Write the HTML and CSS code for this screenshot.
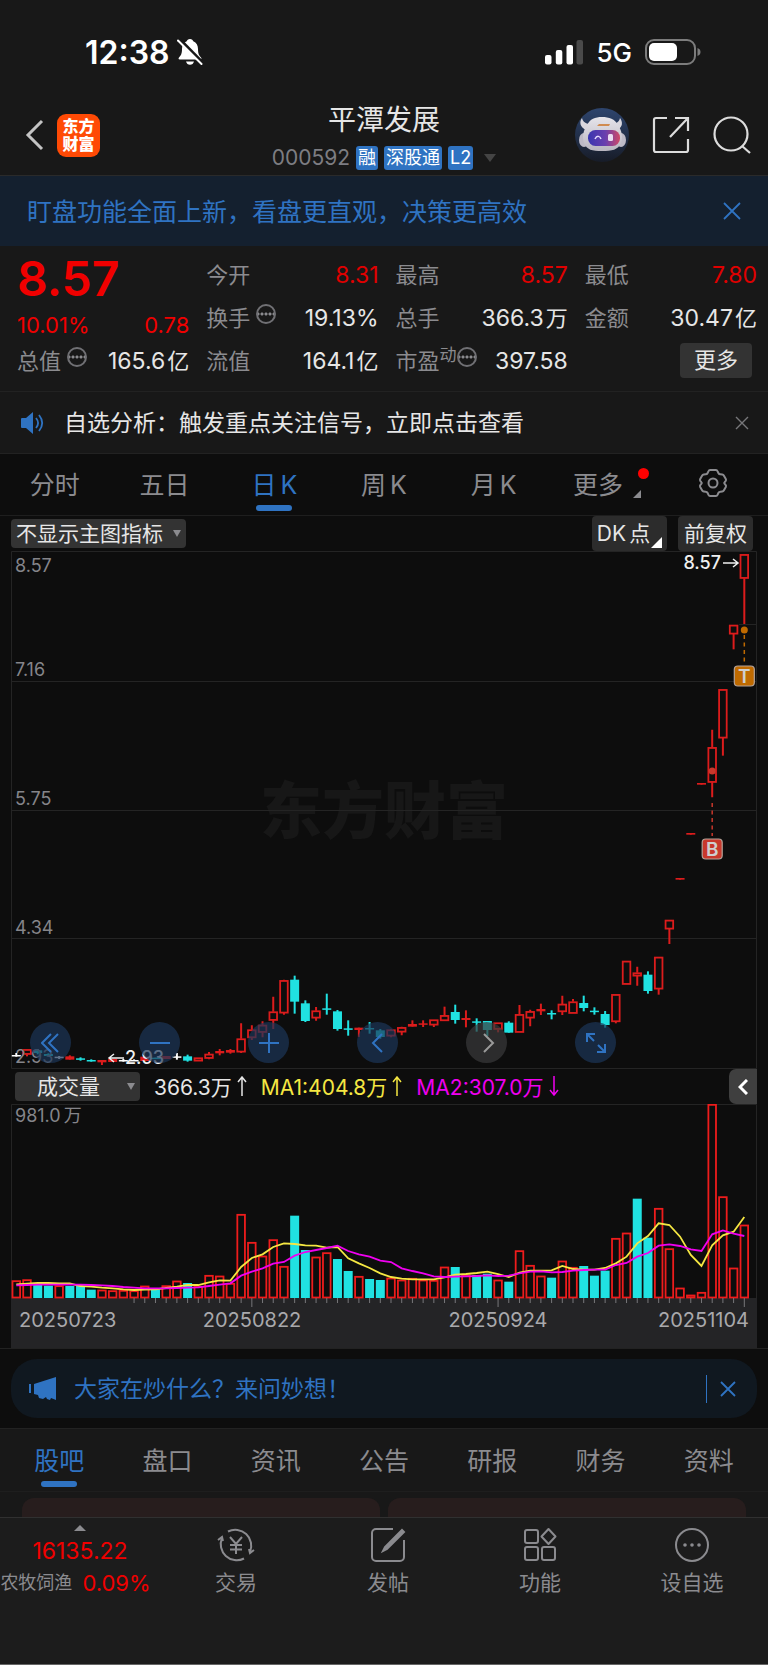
FILE: index.html
```html
<!DOCTYPE html>
<html lang="zh-CN">
<head>
    <meta charset="UTF-8">
    <meta name="viewport" content="width=device-width, initial-scale=1.0">
    <title>平潭发展 000592</title>
    <link rel="stylesheet" href="styles.css">
</head>
<body>
    <div class="status-bar">
        <div class="status-left">
            <span class="clock">12:38</span>
            <svg width="26" height="28" viewBox="0 0 26 28">
                <path d="M13 1c-1.8 0-3 1-3.300 2.300C6.500 4.500 5 7.500 5 11c0 5-1.200 6.500-3 8.500-.8 1-.5 2 .8 2h20.400c1.300 0 1.600-1 .8-2-1.800-2-3-3.500-3-8.500 0-3.500-1.500-6.500-4.700-7.700C16 2 14.800 1 13 1z" fill="#fff"/>
                <path d="M9 23.500h8c-.5 2-2 3.300-4 3.300s-3.500-1.300-4-3.300z" fill="#fff"/>
                <path d="M2.500 1L26 25" stroke="#181818" stroke-width="3"/>
                <path d="M1 2.500L24.500 26" stroke="#fff" stroke-width="2" stroke-linecap="round"/>
            </svg>
        </div>
        <div class="status-right">
            <svg width="38" height="25" viewBox="0 0 38 25">
                <rect x="0" y="15" width="6.500" height="9.500" rx="2" fill="#fff"/>
                <rect x="10.800" y="10" width="6.500" height="14.500" rx="2" fill="#fff"/>
                <rect x="21.500" y="5" width="6.500" height="19.500" rx="2" fill="#fff"/>
                <rect x="31.500" y="0" width="6.500" height="24.500" rx="2" fill="#4a4a4a"/>
            </svg>
            <span class="network">5G</span>
            <svg width="56" height="26" viewBox="0 0 56 26">
                <rect x="1" y="1" width="49" height="24" rx="8" fill="none" stroke="#7c7c7c" stroke-width="2"/>
                <rect x="4" y="4" width="28" height="18" rx="5" fill="#fff"/>
                <path d="M52.500 9c2 .8 3 2 3 4s-1 3.200-3 4z" fill="#7c7c7c"/>
            </svg>
        </div>
    </div>

    <header class="header">
        <div class="header-left">
            <button class="icon-btn" aria-label="返回">
                <svg width="19" height="32" viewBox="0 0 19 32" fill="none" stroke="#c4c4c4" stroke-width="3"><path d="M17 2L3 16l14 14"/></svg>
            </button>
            <a class="logo" href="#"><span>东方</span><span>财富</span></a>
        </div>
        <div class="header-title">
            <h1>平潭发展</h1>
            <div class="stock-code">
                <span>000592</span>
                <span class="tag">融</span>
                <span class="tag">深股通</span>
                <span class="tag">L2</span>
                <i class="caret"></i>
            </div>
        </div>
        <div class="header-right">
            <button class="icon-btn" aria-label="妙想">
                <svg width="54" height="54" viewBox="0 0 54 54">
                    <defs>
                        <linearGradient id="sky" x1="0" y1="0" x2="0" y2="1"><stop offset="0" stop-color="#2e456e"/><stop offset="1" stop-color="#171c28"/></linearGradient>
                        <linearGradient id="visor" x1="0" y1="0" x2="1" y2="0"><stop offset="0" stop-color="#3a36b0"/><stop offset=".55" stop-color="#6a3fae"/><stop offset="1" stop-color="#d04866"/></linearGradient>
                        <linearGradient id="shell" x1="0" y1="0" x2="0" y2="1"><stop offset="0" stop-color="#e6e4ea"/><stop offset="1" stop-color="#b9b6c0"/></linearGradient>
                    </defs>
                    <circle cx="27" cy="27" r="27" fill="url(#sky)"/>
                    <path d="M7 10c-3 4-2 9 4 12l5-6c-5 0-8-2-9-6zM45 10c3 4 3 9-3 12l-6-6c5 0 8-2 9-6z" fill="#d9d7de"/>
                    <ellipse cx="9" cy="32" rx="5" ry="7" fill="#bdbac6"/>
                    <ellipse cx="46" cy="32" rx="5" ry="7" fill="#bdbac6"/>
                    <path d="M12 17c3-6 8-8 15-8s13 2 16 8c4 6 5 12 3 18-3 7-9 8-19 8S12 42 9 35c-2-6-1-12 3-18z" fill="url(#shell)"/>
                    <rect x="13" y="22" width="32" height="16" rx="7.500" fill="url(#visor)"/>
                    <path d="M22 18l2-2h11l-1 2z" fill="#d08b50"/>
                    <path d="M20 31c2-4 5-3 6 0" fill="none" stroke="#e6dcff" stroke-width="1.500"/>
                    <rect x="33" y="26" width="5" height="7" rx="1.500" fill="#e9dcf0"/>
                </svg>
            </button>
            <button class="icon-btn" aria-label="分享">
                <svg width="38" height="38" viewBox="0 0 38 38" fill="none" stroke="#dcdcdc" stroke-width="2.200">
                    <path d="M15 2H4a2 2 0 0 0-2 2v30a2 2 0 0 0 2 2h30a2 2 0 0 0 2-2V23M23 2h13v13M36 2L18 21"/>
                </svg>
            </button>
            <button class="icon-btn" aria-label="搜索">
                <svg width="38" height="38" viewBox="0 0 38 38" fill="none" stroke="#dcdcdc" stroke-width="2.200"><circle cx="18" cy="18" r="16.500"/><path d="M29 30l8 7"/></svg>
            </button>
        </div>
    </header>

    <div class="banner">
        <a href="#">盯盘功能全面上新，看盘更直观，决策更高效</a>
        <button class="icon-btn" aria-label="关闭">
            <svg width="18" height="18" viewBox="0 0 18 18" stroke="#2f73c2" stroke-width="1.800"><path d="M1 1l16 16M17 1L1 17"/></svg>
        </button>
    </div>

    <section class="quote">
        <div class="quote-main">
            <strong class="price">8.57</strong>
            <div class="change"><span>10.01%</span><span>0.78</span></div>
        </div>
        <dl class="item"><dt>今开</dt><dd class="up">8.31</dd></dl>
        <dl class="item"><dt>最高</dt><dd class="up">8.57</dd></dl>
        <dl class="item"><dt>最低</dt><dd class="up">7.80</dd></dl>
        <dl class="item"><dt>换手<i class="info"></i></dt><dd>19.13%</dd></dl>
        <dl class="item"><dt>总手</dt><dd>366.3<span>万</span></dd></dl>
        <dl class="item"><dt>金额</dt><dd>30.47<span>亿</span></dd></dl>
        <dl class="item"><dt>总值<i class="info"></i></dt><dd>165.6<span>亿</span></dd></dl>
        <dl class="item"><dt>流值</dt><dd>164.1<span>亿</span></dd></dl>
        <dl class="item"><dt>市盈<sup>动</sup><i class="info"></i></dt><dd>397.58</dd></dl>
        <div class="quote-more"><button>更多</button></div>
    </section>

    <div class="alert">
        <svg width="26" height="26" viewBox="0 0 26 26">
            <path d="M2 8h4l7-6v22l-7-6H2a1 1 0 0 1-1-1V9a1 1 0 0 1 1-1z" fill="#2f73c2"/>
            <path d="M16 8c2.500 3 2.500 7 0 10M19 5c4 5 4 11 0 16" fill="none" stroke="#2f73c2" stroke-width="1.800"/>
        </svg>
        <a href="#">自选分析：触发重点关注信号，立即点击查看</a>
        <button class="icon-btn" aria-label="关闭">
            <svg width="14" height="14" viewBox="0 0 14 14" stroke="#77777a" stroke-width="1.400"><path d="M1 1l12 12M13 1L1 13"/></svg>
        </button>
    </div>

    <nav class="period-tabs">
        <button>分时</button>
        <button>五日</button>
        <button class="active">日<span>K</span></button>
        <button>周<span>K</span></button>
        <button>月<span>K</span></button>
        <button class="has-dot">更多</button>
        <button aria-label="设置">
            <svg width="30" height="30" viewBox="0 0 30 30" fill="none" stroke="#8b8b8f" stroke-width="2">
                <path d="M12 2h6q1 0 1.500 1.200l1 2q.5 1 1.800 1l2 .2q1 .1 1.500 1l2 3.600q.5 1-.1 1.800l-1.200 1.500q-.6.700 0 1.400l1.200 1.500q.6.800.1 1.800l-2 3.600q-.5.900-1.500 1l-2 .2q-1.300 0-1.800 1l-1 2Q19 28 18 28h-6q-1 0-1.500-1.200l-1-2q-.5-1-1.800-1l-2-.2q-1-.1-1.500-1l-2-3.600q-.5-1 .1-1.800l1.200-1.500q.6-.7 0-1.400l-1.200-1.500q-.6-.8-.1-1.800l2-3.600q.5-.9 1.500-1l2-.2q1.300 0 1.800-1l1-2Q11 2 12 2z"/>
                <circle cx="15" cy="15" r="4.500"/>
            </svg>
        </button>
    </nav>

    <div class="toolbar">
        <div class="select-box main-index">
            <select aria-label="主图指标"><option>不显示主图指标</option></select>
            <i class="caret"></i>
        </div>
        <button class="tool-btn corner">DK<span>点</span></button>
        <button class="tool-btn">前复权</button>
    </div>

    <main class="charts">
        <div class="price-chart">
            <svg id="priceChart" viewBox="0 0 746 518"></svg>
            <div class="chart-controls">
                <button aria-label="最早"><svg viewBox="0 0 20 20"><path d="M10 1L1 10l9 9M17 1l-9 9 9 9"/></svg></button>
                <button aria-label="缩小"><svg viewBox="0 0 20 20"><path d="M0 10h20"/></svg></button>
                <button aria-label="放大"><svg viewBox="0 0 20 20"><path d="M0 10h20M10 0v20"/></svg></button>
                <button aria-label="向左"><svg viewBox="0 0 20 20"><path d="M14 1l-9 9 9 9"/></svg></button>
                <button class="disabled" aria-label="向右"><svg viewBox="0 0 20 20"><path d="M7 1l9 9-9 9"/></svg></button>
                <button aria-label="全屏"><svg viewBox="0 0 20 20"><path d="M1 9V1h8M1 1l7 7M19 11v8h-8M19 19l-7-7"/></svg></button>
            </div>
        </div>

        <div class="volume-head">
            <div class="select-box volume-index">
                <select aria-label="副图指标"><option>成交量</option></select>
                <i class="caret"></i>
            </div>
            <span class="vol">366.3万<svg width="10" height="20" viewBox="0 0 10 20"><path d="M5 20V1M1 6l4-5 4 5"/></svg></span>
            <span class="ma1">MA1:404.8万<svg width="10" height="20" viewBox="0 0 10 20"><path d="M5 20V1M1 6l4-5 4 5"/></svg></span>
            <span class="ma2">MA2:307.0万<svg width="10" height="20" viewBox="0 0 10 20"><path d="M5 0v19M1 14l4 5 4-5"/></svg></span>
            <button class="collapse" aria-label="展开">
                <svg width="10" height="16" viewBox="0 0 10 16" fill="none" stroke="#fff" stroke-width="3"><path d="M9 1L2 8l7 7"/></svg>
            </button>
        </div>
        <svg id="volumeChart" viewBox="0 0 746 244"></svg>
    </main>

    <div class="ask">
        <div class="ask-inner">
            <svg width="28" height="24" viewBox="0 0 28 24" fill="#2f73c2"><path d="M0 7h2v9H0zM5 7l22-7v23l-5-2-1 2-3-1-1-2-3 2-4-1-1-3-4-1z"/></svg>
            <a href="#">大家在炒什么？来问妙想！</a>
            <button class="icon-btn" aria-label="关闭">
                <svg width="16" height="16" viewBox="0 0 16 16" stroke="#2f73c2" stroke-width="1.800"><path d="M1 1l14 14M15 1L1 15"/></svg>
            </button>
        </div>
    </div>

    <nav class="info-tabs">
        <button class="active">股吧</button>
        <button>盘口</button>
        <button>资讯</button>
        <button>公告</button>
        <button>研报</button>
        <button>财务</button>
        <button>资料</button>
    </nav>
    <div class="cards"><div></div><div></div></div>

    <footer class="bottom-nav">
        <a class="index" href="#">
            <i class="arrow-up"></i>
            <span class="index-value">16135.22</span>
            <span class="index-name">农牧饲渔 <b>0.09%</b></span>
        </a>
        <a href="#">
            <svg width="38" height="36" viewBox="0 0 38 36">
                <path d="M11 4.500A16 16 0 0 1 33 25M27 31.500A16 16 0 0 1 5 11M1 13l4-3 1 4M37 23l-4 3-1-4M13 10l6 7 6-7M19 17v10M13 18h12M13 22.500h12"/>
            </svg>
            <span>交易</span>
        </a>
        <a href="#">
            <svg width="38" height="36" viewBox="0 0 38 36">
                <path d="M24 2H7a4 4 0 0 0-4 4v24a4 4 0 0 0 4 4h24a4 4 0 0 0 4-4V13"/>
                <path d="M33 3l2 2-17 17-4 2 2-4z" fill="#8b8b8f"/>
            </svg>
            <span>发帖</span>
        </a>
        <a href="#">
            <svg width="38" height="36" viewBox="0 0 38 36">
                <rect x="4" y="3" width="13" height="13" rx="2"/><rect x="4" y="20" width="13" height="13" rx="2"/><rect x="21" y="20" width="13" height="13" rx="2"/>
                <path d="M27.500 2l7 7.500-7 7.500-7-7.500z" stroke-linejoin="round"/>
            </svg>
            <span>功能</span>
        </a>
        <a href="#">
            <svg width="38" height="36" viewBox="0 0 38 36">
                <circle cx="19" cy="18" r="16"/>
                <g fill="#8b8b8f" stroke="none"><circle cx="12" cy="18" r="1.800"/><circle cx="19" cy="18" r="1.800"/><circle cx="26" cy="18" r="1.800"/></g>
            </svg>
            <span>设自选</span>
        </a>
    </footer>

    <script src="chart.js"></script>
</body>
</html>
```
FILE: styles.css
```css
* {
    margin: 0;
    padding: 0;
    box-sizing: border-box;
}

body {
    font-family: Inter, 'Noto Sans CJK SC', sans-serif;
    font-size: 22px;
    color: #e6e6e6;
    background: #0d0d0d;
}

button, select {
    font: inherit;
    color: inherit;
    background: none;
    border: none;
    cursor: pointer;
}

a {
    color: inherit;
    text-decoration: none;
}

svg {
    display: block;
}

.icon-btn {
    display: flex;
}

.caret {
    border: 6px solid transparent;
    border-top: 8px solid #8b8b8f;
    border-bottom: 0;
}

/* Status bar */
.status-bar {
    display: flex;
    justify-content: space-between;
    height: 100px;
    padding: 4px 67px 0 85px;
    background: #181818;
}

.status-left, .status-right {
    display: flex;
    align-items: center;
    color: #fff;
}

.status-left {
    gap: 7px;
}

.status-right {
    gap: 13px;
}

.clock {
    font-size: 32px;
    font-weight: 600;
}

.network {
    font-size: 26px;
    font-weight: 500;
}

/* Header */
.header {
    display: grid;
    grid-template-columns: 1fr auto 1fr;
    align-items: center;
    height: 76px;
    padding: 0 17px 5px 25px;
    background: #181818;
    border-bottom: 1px solid #2a2a2a;
}

.header-left, .header-right {
    display: flex;
    align-items: center;
}

.header-left {
    gap: 13px;
}

.header-right {
    justify-content: flex-end;
    gap: 23px;
}

.logo {
    display: flex;
    flex-direction: column;
    justify-content: center;
    align-items: center;
    width: 43px;
    height: 43px;
    border-radius: 9px;
    background: #ff4a05;
    color: #fff;
    font-size: 16px;
    font-weight: 900;
    line-height: 18px;
}

.header-title {
    padding-right: 8px;
    text-align: center;
}

.header-title h1 {
    margin-bottom: 6px;
    font-size: 28px;
    font-weight: 400;
    line-height: 40px;
}

.stock-code {
    display: flex;
    align-items: center;
    gap: 6px;
    color: #7d7d82;
    font-size: 21px;
    line-height: 24px;
}

.tag {
    padding: 0 2px;
    border-radius: 3px;
    background: #2f73c2;
    color: #fff;
    font-size: 18px;
}

.stock-code .caret {
    margin-left: 5px;
    border-top-color: #444;
}

.banner {
    display: flex;
    justify-content: space-between;
    align-items: center;
    height: 70px;
    padding: 0 27px;
    background: #14202f;
    color: #2f73c2;
    font-size: 25px;
}

.banner a, .alert a, .ask a {
    padding-bottom: 3px;
}

/* Quote */
.quote {
    display: grid;
    grid-template-columns: repeat(4, minmax(0, 1fr));
    grid-auto-rows: 43px;
    column-gap: 17px;
    height: 146px;
    padding: 8px 11px 0 17px;
    background: #181818;
    border-bottom: 1px solid #222;
}

.quote-main {
    grid-row: span 2;
    color: #f00000;
}

.price {
    display: block;
    font-size: 48px;
    font-weight: 600;
    line-height: 50px;
}

.change {
    display: flex;
    justify-content: space-between;
    line-height: 42px;
}

.item {
    display: flex;
    justify-content: space-between;
    line-height: 42px;
    white-space: nowrap;
}

.item dt {
    display: flex;
    align-items: center;
    height: 42px;
    color: #8b8b8f;
}

.item dd {
    font-size: 23px;
}

.item dd span {
    margin-left: 2px;
    font-size: 22px;
}

.item .up {
    color: #e00000;
}

.item sup {
    align-self: flex-start;
    font-size: 17px;
    line-height: 30px;
}

/* small circled dots next to a label */
.info {
    width: 20px;
    height: 20px;
    margin: 0 0 8px 6px;
    border: 2px solid #707074;
    border-radius: 50%;
    background: radial-gradient(circle, #8b8b8f 1px, transparent 2px) center / 4px 16px repeat-x;
}

sup + .info {
    margin-left: 0;
}

.quote-more {
    display: flex;
    justify-content: flex-end;
    padding: 3px 5px;
}

.quote-more button {
    width: 72px;
    height: 35px;
    border-radius: 4px;
    background: #333;
    line-height: 35px;
}

/* Alert */
.alert {
    display: flex;
    align-items: center;
    gap: 18px;
    height: 62px;
    padding: 0 19px 0 20px;
    background: #181818;
    border-bottom: 1px solid #222;
    font-size: 23px;
}

.alert .icon-btn {
    margin-left: auto;
}

/* Tabs */
.period-tabs, .info-tabs {
    display: grid;
    grid-template-columns: repeat(7, 1fr);
    height: 62px;
    border-bottom: 1px solid #1e1e1e;
    color: #8b8b8f;
    font-size: 25px;
}

.period-tabs button, .info-tabs button {
    position: relative;
    padding-bottom: 3px;
}

.period-tabs button span {
    margin-left: 4px;
}

.period-tabs svg {
    margin: 0 auto;
}

.period-tabs .active, .info-tabs .active {
    color: #2f73c2;
}

.active::after {
    content: '';
    position: absolute;
    left: 50%;
    bottom: 4px;
    width: 36px;
    height: 6px;
    margin-left: -18px;
    border-radius: 3px;
    background: #2f73c2;
}

.period-tabs .has-dot {
    padding-right: 11px;
}

.has-dot::before {
    content: '';
    position: absolute;
    top: 14px;
    right: 9px;
    width: 11px;
    height: 11px;
    border-radius: 50%;
    background: #f00;
}

.has-dot::after {
    content: '';
    position: absolute;
    right: 17px;
    bottom: 17px;
    border-left: 8px solid transparent;
    border-bottom: 8px solid #8b8b8f;
}

/* Toolbar */
.toolbar {
    display: flex;
    align-items: center;
    gap: 11px;
    height: 35px;
    padding: 0 15px 0 11px;
    font-size: 21px;
}

.select-box {
    position: relative;
    height: 29px;
    border-radius: 4px;
    background: #333;
    font-size: 21px;
}

.select-box select {
    width: 100%;
    height: 29px;
    appearance: none;
}

.select-box .caret {
    position: absolute;
    top: 11px;
    right: 5px;
    border-width: 7px 4px 0;
    pointer-events: none;
}

.main-index {
    width: 175px;
    margin-right: auto;
}

.main-index select {
    padding-left: 5px;
}

.tool-btn {
    position: relative;
    width: 75px;
    height: 35px;
    border-radius: 4px;
    background: #2c2c2c;
    line-height: 35px;
}

.corner {
    padding-right: 12px;
}

.corner span {
    margin-left: 3px;
}

.corner::after {
    content: '';
    position: absolute;
    right: 5px;
    bottom: 3px;
    border-left: 11px solid transparent;
    border-bottom: 11px solid #fff;
}

/* Charts */
.charts {
    padding: 0 11px;
}

.charts > svg, .price-chart > svg {
    width: 100%;
    height: auto;
}

.price-chart {
    position: relative;
}

.chart-controls {
    position: absolute;
    left: 19px;
    bottom: 6px;
    display: flex;
    gap: 68px;
}

.chart-controls button {
    display: flex;
    justify-content: center;
    align-items: center;
    width: 41px;
    height: 41px;
    border-radius: 50%;
    background: rgba(28, 54, 88, 0.7);
}

.chart-controls svg {
    width: 20px;
    height: 20px;
    fill: none;
    stroke: #2f73c2;
    stroke-width: 2;
}

.chart-controls .disabled {
    background: rgba(58, 58, 60, 0.7);
}

.chart-controls .disabled svg {
    stroke: #9a9a9a;
}

.volume-head {
    display: flex;
    align-items: center;
    gap: 14px;
    height: 35px;
    padding-left: 4px;
    font-size: 21px;
}

.volume-head span {
    display: flex;
    align-items: center;
    gap: 5px;
    padding-bottom: 1px;
    white-space: nowrap;
}

.volume-head span svg {
    fill: none;
    stroke: currentColor;
    stroke-width: 1.5;
}

.volume-index {
    width: 125px;
}

.volume-index select {
    padding-left: 22px;
}

.ma1 {
    color: #f5e742;
}

.ma2 {
    color: #f000f0;
}

.collapse {
    display: flex;
    justify-content: center;
    align-items: center;
    width: 28px;
    height: 35px;
    margin-left: auto;
    border-radius: 7px 0 0 7px;
    background: #3f3f3f;
}

.grid {
    fill: none;
    stroke: #242424;
    stroke-width: 1;
}

.axis-label {
    fill: #85858a;
    font-size: 18px;
}

.date-label {
    fill: #a9a9ac;
    font-size: 20px;
}

.mark-label {
    fill: #f0f0f0;
    font-size: 18px;
    font-weight: 500;
}

.watermark {
    fill: #171717;
    font-size: 62px;
    font-weight: 900;
}

/* Ask bar */
.ask {
    padding: 10px 11px;
    border-top: 1px solid #222;
}

.ask-inner {
    display: flex;
    align-items: center;
    gap: 17px;
    height: 59px;
    padding: 0 21px 0 18px;
    border-radius: 26px;
    background: #101820;
    color: #2f73c2;
    font-size: 23px;
}

.ask-inner .icon-btn {
    margin-left: auto;
    padding: 6px 0 6px 13px;
    border-left: 1px solid #2f73c2;
}

.info-tabs {
    height: 64px;
    padding: 0 5px;
    background: #181818;
    border-top: 1px solid #222;
}

.cards {
    display: grid;
    grid-template-columns: 1fr 1fr;
    gap: 8px;
    height: 25px;
    padding: 6px 22px 0;
    background: #181818;
}

.cards div {
    border-radius: 12px 12px 0 0;
    background: #271d1d;
}

/* Bottom nav */
.bottom-nav {
    display: grid;
    grid-template-columns: 160px repeat(4, 1fr);
    height: 148px;
    background: #1c1c1c;
    border-top: 1px solid #303030;
    border-bottom: 1px solid #666;
    color: #8b8b8f;
}

.bottom-nav a {
    display: flex;
    flex-direction: column;
    align-items: center;
    gap: 8px;
    padding-top: 9px;
    font-size: 21px;
    line-height: 24px;
}

.bottom-nav svg {
    fill: none;
    stroke: #8b8b8f;
    stroke-width: 2;
}

.bottom-nav .index {
    padding-top: 7px;
}

.arrow-up {
    border: 6px solid transparent;
    border-top: 0;
    border-bottom: 6px solid #8b8b8f;
}

.index-value {
    color: #f00000;
    font-size: 23px;
}

.index-name {
    display: flex;
    align-items: center;
    gap: 10px;
    margin-right: 9px;
    font-size: 18px;
    white-space: nowrap;
}

.index-name b {
    color: #f00000;
    font-size: 22px;
    font-weight: 400;
}
```
FILE: chart.js
```javascript
const RED = '#dc1c1c';
const CYAN = '#20e2e2';
const STEP = 10.706;
const FIRST = 5.3;

// [kind, top, bottom, high, low]  r = hollow up, f = filled up, c = down, w = flat
const candles = [
    ['w',285,285,279,290], ['r',268,283,268,289], ['c',271,279,267,283], ['c',282,288,280,290], ['w',290,290,288,297],
    ['f',289,299,286,299], ['c',295,297,292,302], ['c',300,303,298,305], ['f',300,307,300,315], ['f',297,306,297,306],
    ['w',300,300,297,305], ['w',300,300,298,303], ['f',290,303,290,303], ['c',293,297,293,297], ['f',288,297,288,297],
    ['w',289,289,279,299], ['c',289,302,284,305], ['r',293,303,293,303], ['r',282,295,276,298], ['f',273,280,267,286],
    ['f',270,278,267,281], ['r',236,276,190,279], ['r',209,233,196,240], ['r',195,217,184,232], ['r',155,181,110,207],
    ['r',61,159,59,164], ['c',59,125,47,161], ['c',130,183,121,186], ['r',152,174,141,182], ['c',145,147,101,164],
    ['c',154,207,150,212], ['c',205,208,181,227], ['f',203,210,203,231], ['c',204,207,186,221], ['c',211,231,207,236],
    ['r',209,228,207,232], ['r',202,216,200,226], ['f',192,200,181,200], ['f',190,192,181,201], ['r',179,195,179,201],
    ['r',166,182,140,182], ['c',156,180,134,191], ['f',174,180,151,202], ['c',184,187,175,215], ['c',183,210,183,228],
    ['r',188,208,188,217], ['c',188,218,184,218], ['r',163,217,135,217], ['r',154,174,149,199], ['f',147,154,131,165],
    ['c',159,162,151,178], ['r',132,155,107,165], ['r',125,160,117,160], ['c',129,144,107,154], ['c',152,155,142,164],
    ['c',162,195,153,203], ['r',103,185,103,190], ['r',3,73,3,73], ['r',38,48,20,77], ['c',44,93,34,101],
    ['r',-9,87,-9,104], ['r',-120,-93,-120,-48], ['f',-246,-241,-246,-241], ['f',-381,-376,-381,-376], ['f',-531,-526,-531,-526],
    ['r',-638,-533,-691,-488], ['r',-812,-666,-812,-613], ['r',-1005,-978,-1005,-932], ['r',-1217,-1145,-1217,-1008]
];

// column tops, measured up from the baseline
const volumes = [
    52,55,40,37,37,36,36,25,24,22,23,22,36,26,37,51,45,35,68,66,44,251,167,126,175,95,247,144,123,136,117,81,65,57,54,
    60,54,59,54,53,93,93,69,69,73,54,49,142,98,66,61,111,92,96,67,82,179,195,298,181,269,148,30,9,17,581,304,90,219
];
const volumeDown = [2,3,5,6,7,13,16,26,27,30,31,33,34,41,43,44,46,50,53,54,55,58,59];

const ma1 = [
    41,43,45,45,44,44,36,34,31,29,26,24,25,26,30,34,39,39,47,53,52,93,120,131,153,164,162,158,157,151,153,119,104,90,74,
    63,58,56,56,56,62,70,72,75,79,72,63,76,82,82,83,96,87,85,85,90,104,124,164,186,224,219,184,129,96,158,188,199,243
];
const ma2 = [
    38,39,40,40,40,40,40,39,38,36,33,31,29,29,29,30,31,32,36,40,44,67,79,89,103,108,127,138,144,150,157,141,131,124,112,
    108,89,81,74,65,63,64,65,66,68,66,67,74,79,80,77,78,82,84,85,85,99,105,124,135,157,161,156,146,141,191,203,193,186
];

const x = i => FIRST + i * STEP;
const price = v => 409 + v / 3;

function drawPrice() {
    let s = '<path class="grid" d="M.5 .5H745.500V517.500H.5zM0 130.500H746M0 387.500H746M728 73.500H746"/>';
    s += '<text class="watermark" x="373" y="283" text-anchor="middle">东方财富</text>';
    s += '<path class="grid" d="M0 259.500H746"/>';

    candles.forEach(([kind, top, bottom, high, low], i) => {
        const cx = x(i);
        const y1 = price(top), y2 = price(bottom);
        const color = kind === 'c' ? CYAN : kind === 'w' ? '#fff' : RED;
        if (kind === 'r') {
            s += `<path d="M${cx} ${price(high)}V${y1}M${cx} ${y2}V${price(low)}" stroke="${color}" stroke-width="2"/>`;
            s += `<rect x="${cx - 3.8}" y="${y1 + 0.6}" width="7.600" height="${Math.max(y2 - y1 - 1, 2)}" fill="none" stroke="${color}" stroke-width="1.800"/>`;
        } else {
            s += `<path d="M${cx} ${price(high)}V${price(low)}" stroke="${color}" stroke-width="2"/>`;
            s += `<rect x="${cx - 4.5}" y="${y1}" width="9" height="${Math.max(y2 - y1, 1.5)}" fill="${color}"/>`;
        }
    });

    [['8.57', 21], ['7.16', 125], ['5.75', 254], ['4.34', 383], ['2.93', 512]].forEach(([t, y]) => {
        s += `<text class="axis-label" x="4" y="${y}">${t}</text>`;
    });

    // high and low marks
    s += '<text class="mark-label" x="710" y="18" text-anchor="end">8.57</text>';
    s += '<path d="M712 12h15M722 8l5 4-5 4" fill="none" stroke="#f0f0f0" stroke-width="1.500"/>';
    s += '<text class="mark-label" x="114" y="513">2.93</text>';
    s += '<path d="M113 507H98M103 503l-5 4 5 4" fill="none" stroke="#f0f0f0" stroke-width="1.500"/>';

    s += badge(65, 220, 298, '#c8382c', 'B');
    s += badge(68, 79, 125, '#bf6a00', 'T');
    document.getElementById('priceChart').innerHTML = s;
}

function badge(i, dot, y, color, letter) {
    const cx = x(i);
    return `<circle cx="${cx}" cy="${dot}" r="3.500" fill="${color}"/>` +
        `<path d="M${cx} ${letter === 'B' ? 252 : 84}V${y - 13}" stroke="${color}" stroke-width="1.500" stroke-dasharray="4 3.500"/>` +
        `<rect x="${cx - 10}" y="${y - 10}" width="20" height="20" rx="3.500" fill="${color}" stroke="#b5a49a" stroke-width="1.200"/>` +
        `<text x="${cx}" y="${y + 7}" text-anchor="middle" font-size="19" font-weight="600" fill="#cfcfcf">${letter}</text>`;
}

function drawVolume() {
    const base = 194;
    let s = '<path class="grid" d="M.5 194V.5H745.500V194"/>';
    s += '<rect x="0" y="194" width="746" height="50" fill="#242426"/>';
    s += '<text class="axis-label" x="4" y="18">981.0<tspan dx="3">万</tspan></text>';

    volumes.forEach((v, i) => {
        const h = v / 3;
        if (volumeDown.includes(i)) {
            s += `<rect x="${x(i) - 4.5}" y="${base - h}" width="9" height="${h}" fill="${CYAN}"/>`;
        } else {
            s += `<rect x="${x(i) - 3.8}" y="${base - h + 0.5}" width="7.600" height="${Math.max(h - 1, 1)}" fill="none" stroke="#ee1c1c" stroke-width="1.800"/>`;
        }
        if (i > 10) {
            const main = i === 22 || i === 45 || i === 68;
            s += `<path d="M${x(i)} 194v${main ? 9 : 5}" stroke="#77777a" stroke-width="1"/>`;
        }
    });

    [[ma1, '#f5e742'], [ma2, '#f000f0']].forEach(([line, color]) => {
        const points = line.map((v, i) => `${x(i)},${base - v / 3}`).join(' ');
        s += `<polyline points="${points}" fill="none" stroke="${color}" stroke-width="1.800"/>`;
    });

    s += '<text class="date-label" x="8" y="223">20250723</text>';
    s += '<text class="date-label" x="241" y="223" text-anchor="middle">20250822</text>';
    s += '<text class="date-label" x="487" y="223" text-anchor="middle">20250924</text>';
    s += '<text class="date-label" x="738" y="223" text-anchor="end">20251104</text>';
    document.getElementById('volumeChart').innerHTML = s;
}

drawPrice();
drawVolume();
```
